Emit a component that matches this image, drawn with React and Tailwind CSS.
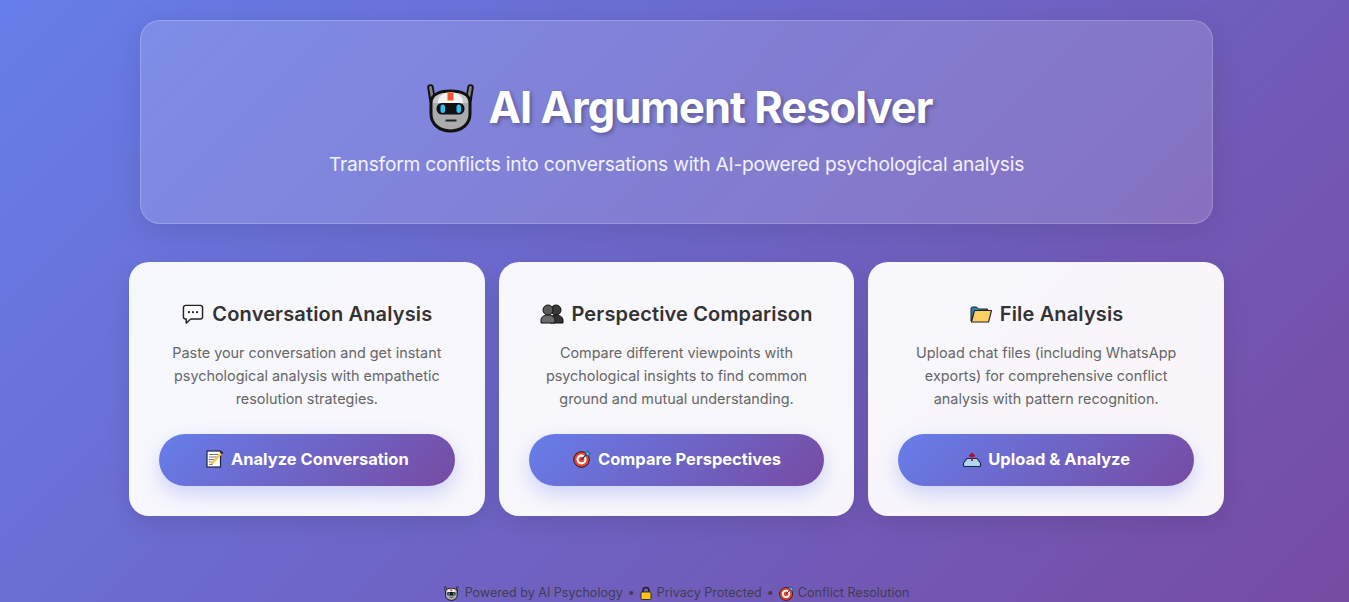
const RobotIcon = ({ className }) => (
  <svg viewBox="0 0 50 50" className={className}>
    <path d="M4.500 4.500l2 13M44.500 4.500l-2 13" stroke="#111" strokeWidth="6.500" strokeLinecap="round" />
    <path d="M4.500 4.500l2 11M44.500 4.500l-2 11" stroke="#808080" strokeWidth="2.800" strokeLinecap="round" />
    <path d="M5 20c0-8 7.500-12 19.500-12S44 12 44 20v11c0 10-8.500 17-19.500 17S5 41 5 31z" fill="#ababab" stroke="#111" strokeWidth="3" />
    <path d="M7 20c0-7 6.500-10.500 17.500-10.500S42 13 42 20z" fill="#c9c9c9" />
    <path d="M12 20c0-6 4-10.500 12.500-10.500S37 14 37 20z" fill="#f4f4f4" />
    <rect x="21.500" y="9.500" width="6" height="8" fill="#f2542d" />
    <rect x="10.500" y="20" width="28" height="11.500" rx="5.500" fill="#111" />
    <rect x="14.500" y="21.500" width="4.500" height="8.500" rx="2.200" fill="#29c5f6" />
    <rect x="30.500" y="21.500" width="4.500" height="8.500" rx="2.200" fill="#29c5f6" />
    <path d="M19.500 37.500h11" stroke="#222" strokeWidth="2" />
  </svg>
);

const BubbleIcon = ({ className }) => (
  <svg viewBox="0 0 24 22" className={className}>
    <path d="M4 1.500h16a2.500 2.500 0 0 1 2.500 2.500v10a2.500 2.500 0 0 1-2.500 2.500H9.500L4.500 21v-4.500H4A2.500 2.500 0 0 1 1.500 14V4A2.500 2.500 0 0 1 4 1.500z" fill="#fff" stroke="#222" strokeWidth="1.600" strokeLinejoin="round" />
    <circle cx="7.500" cy="9" r="1.200" fill="#222" />
    <circle cx="12" cy="9" r="1.200" fill="#222" />
    <circle cx="16.500" cy="9" r="1.200" fill="#222" />
  </svg>
);

const PeopleIcon = ({ className }) => (
  <svg viewBox="0 0 24 20" className={className}>
    <circle cx="16" cy="6" r="5" fill="#3a3a3a" stroke="#111" strokeWidth="1" />
    <path d="M10 19v-3c0-3 2.500-5 6-5s7 2 7 5v3z" fill="#333" stroke="#111" strokeWidth="1" />
    <circle cx="8" cy="6" r="5" fill="#5a5a5a" stroke="#111" strokeWidth="1" />
    <path d="M1 19v-3c0-3 3-5 7-5s7 2 7 5v3z" fill="#6b6b6b" stroke="#111" strokeWidth="1" />
  </svg>
);

const FolderIcon = ({ className }) => (
  <svg viewBox="0 0 22 17" className={className}>
    <path d="M1 15V2.500C1 1.500 1.500 1 2.500 1h4l2 2h9v2H5z" fill="#2f7fb5" stroke="#222" strokeWidth="1" strokeLinejoin="round" />
    <path d="M4.500 4.500h17l-3 11.500H1.500z" fill="#fdd067" stroke="#222" strokeWidth="1.100" strokeLinejoin="round" />
  </svg>
);

const MemoIcon = ({ className }) => (
  <svg viewBox="0 0 18 18" className={className}>
    <rect x="1" y="1" width="13.500" height="16" fill="#fff" stroke="#1c2340" strokeWidth="1.200" />
    <path d="M3 4.500h9M3 7h8M3 9.500h5M3 12h4M3 14.500h4" stroke="#666" strokeWidth="0.900" />
    <path d="M5.500 14L15.500 3" stroke="#f7c948" strokeWidth="2.400" />
    <path d="M15 3.500l1.500-1.600" stroke="#1c2340" strokeWidth="2.400" />
  </svg>
);

const TargetIcon = ({ className }) => (
  <svg viewBox="0 0 18 18" className={className}>
    <circle cx="8.500" cy="9.500" r="7.800" fill="#e8432d" stroke="#1a1a1a" strokeWidth="1" />
    <circle cx="8.500" cy="9.500" r="5" fill="#fff" />
    <circle cx="8.500" cy="9.500" r="2.800" fill="#e8432d" />
    <path d="M8.500 9.500L15 3" stroke="#1e3a5f" strokeWidth="1.200" />
    <path d="M12 3l3-2.400.6 2 2 .6-2.400 3z" fill="#3fb0e8" stroke="#1e3a5f" strokeWidth="0.600" />
  </svg>
);

const UploadIcon = ({ className }) => (
  <svg viewBox="0 0 19 15" className={className}>
    <path d="M4.500 6.500L1 11v2.500c0 .6.400 1 1 1h15c.6 0 1-.4 1-1V11l-3.500-4.500z" fill="#a9d8f0" stroke="#1c2340" strokeWidth="1.100" strokeLinejoin="round" />
    <path d="M9.500 9V3" stroke="#c8102e" strokeWidth="1.800" />
    <path d="M6.500 4.200L9.500 .8l3 3.400z" fill="#c8102e" stroke="#5c0a14" strokeWidth="0.500" />
  </svg>
);

const LockIcon = ({ className }) => (
  <svg viewBox="0 0 12 14" className={className}>
    <path d="M3 7V4.500a3 3 0 0 1 6 0V7" fill="none" stroke="#222" strokeWidth="1.600" />
    <rect x="1" y="6" width="10" height="7.500" rx="1.200" fill="#fcc419" stroke="#222" strokeWidth="0.900" />
  </svg>
);

const cards = [
  {
    Icon: BubbleIcon,
    iconClass: 'w-[24px] h-[20px]',
    title: 'Conversation Analysis',
    lines: ['Paste your conversation and get instant', 'psychological analysis with empathetic', 'resolution strategies.'],
    BtnIcon: MemoIcon,
    btnClass: 'w-[20px] h-[18px]',
    label: 'Analyze Conversation',
  },
  {
    Icon: PeopleIcon,
    iconClass: 'w-[24px] h-[20px]',
    title: 'Perspective Comparison',
    lines: ['Compare different viewpoints with', 'psychological insights to find common', 'ground and mutual understanding.'],
    BtnIcon: TargetIcon,
    btnClass: 'w-[20px] h-[18px]',
    label: 'Compare Perspectives',
  },
  {
    Icon: FolderIcon,
    iconClass: 'w-[24px] h-[17px]',
    title: 'File Analysis',
    lines: ['Upload chat files (including WhatsApp', 'exports) for comprehensive conflict', 'analysis with pattern recognition.'],
    BtnIcon: UploadIcon,
    btnClass: 'w-[20px] h-[15px]',
    label: 'Upload & Analyze',
  },
];

export default function App() {
  return (
    <div className="min-h-screen overflow-hidden bg-[linear-gradient(135deg,#667eea_0%,#764ba2_100%)] font-['Inter',sans-serif]">
      <div className="flex flex-col items-center pt-5 pl-1">
        {/* Header */}
        <div className="w-[1073px] h-[204px] flex flex-col items-center bg-white/15 border border-white/20 rounded-[20px] shadow-[0_8px_32px_rgba(0,0,0,0.1)] pt-[57px]">
          <h1 className="flex items-center text-[43.5px] leading-[58px] font-bold text-white tracking-[-1px] [text-shadow:2px_2px_4px_rgba(0,0,0,0.3)]">
            <RobotIcon className="w-[50px] h-[50px] ml-[5px] mr-[13px] mt-[2px]" />
            AI Argument Resolver
          </h1>
          <p className="mt-[14px] text-[19.2px] leading-[29px] text-white/90 tracking-[-0.22px]">
            Transform conflicts into conversations with AI-powered psychological analysis
          </p>
        </div>

        {/* Cards */}
        <div className="mt-[38px] flex gap-[14px]">
          {cards.map(({ Icon, iconClass, title, lines, BtnIcon, btnClass, label }) => (
            <div key={title} className="w-[355.67px] h-[254px] bg-white/95 rounded-[20px] shadow-[0_8px_25px_rgba(0,0,0,0.1)] p-[30px] pt-[36px] flex flex-col items-center">
              <h2 className="flex items-center gap-[7px] text-[20px] leading-[32px] font-semibold text-[#333] tracking-[0.15px]">
                <Icon className={iconClass} />
                {title}
              </h2>
              <p className="mt-[11px] text-[14.4px] leading-[23px] text-[#666] text-center">
                {lines.map((l) => <span key={l} className="block">{l}</span>)}
              </p>
              <button className="mt-[24px] w-full h-[52px] pb-[2px] rounded-full bg-[linear-gradient(135deg,#667eea_0%,#764ba2_100%)] text-white text-[16.5px] font-bold flex items-center justify-center gap-[6px] shadow-[0_8px_20px_rgba(102,126,234,0.3)]">
                <BtnIcon className={btnClass} />
                {label}
              </button>
            </div>
          ))}
        </div>

        {/* Footer */}
        <div className="mt-[69px] flex items-center text-[12.56px] leading-[16px] text-[#333]/80">
          <RobotIcon className="w-[15px] h-[15px] mr-[6px]" />
          <span>Powered by AI Psychology</span>
          <span className="mx-[5px]">•</span>
          <LockIcon className="w-[12px] h-[14px] mr-[5px]" />
          <span>Privacy Protected</span>
          <span className="mx-[5px]">•</span>
          <TargetIcon className="w-[15px] h-[15px] mr-[4px]" />
          <span>Conflict Resolution</span>
        </div>
      </div>
    </div>
  );
}
